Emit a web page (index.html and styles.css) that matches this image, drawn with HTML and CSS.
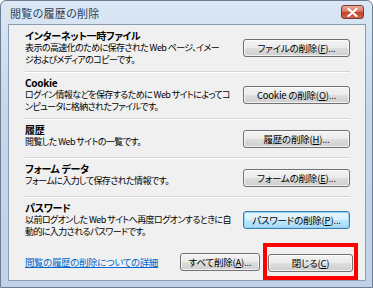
FILE: index.html
```html
<!DOCTYPE html>
<html lang="ja">
<head>
    <meta charset="UTF-8">
    <title>閲覧の履歴の削除</title>
    <link rel="stylesheet" href="styles.css">
</head>
<body>

    <div class="window">
        <div class="title-bar">
            <span class="title-text">閲覧の履歴の削除</span>
            <span class="close-btn">
                <svg width="11" height="9" viewBox="0 0 11 9">
                    <path d="M1.5 1 L9.5 8 M9.5 1 L1.5 8" stroke="#ffffff" stroke-width="2.2" stroke-linecap="round"/>
                </svg>
            </span>
        </div>

        <div class="content">
            <div class="section">
                <div class="text-box">
                    <h3>インターネット一時ファイル</h3>
                    <p>表示の高速化のために保存された Web ページ、イメー<br>ジおよびメディアのコピーです。</p>
                </div>
                <button class="btn">ファイルの削除(<u>F</u>)...</button>
            </div>

            <div class="section">
                <div class="text-box">
                    <h3>Cookie</h3>
                    <p>ログイン情報などを保存するために Web サイトによってコ<br>ンピュータに格納されたファイルです。</p>
                </div>
                <button class="btn">Cookie の削除(<u>O</u>)...</button>
            </div>

            <div class="section short">
                <div class="text-box">
                    <h3>履歴</h3>
                    <p>閲覧した Web サイトの一覧です。</p>
                </div>
                <button class="btn">履歴の削除(<u>H</u>)...</button>
            </div>

            <div class="section short">
                <div class="text-box">
                    <h3>フォーム データ</h3>
                    <p>フォームに入力して保存された情報です。</p>
                </div>
                <button class="btn">フォームの削除(<u>E</u>)...</button>
            </div>

            <div class="section last">
                <div class="text-box">
                    <h3>パスワード</h3>
                    <p>以前ログオンした Web サイトへ再度ログオンするときに自<br>動的に入力されるパスワードです。</p>
                </div>
                <button class="btn focused">パスワードの削除(<u>P</u>)...</button>
            </div>

            <div class="bottom-row">
                <a class="link" href="#">閲覧の履歴の削除についての詳細</a>
                <button class="btn btn-all">すべて削除(<u>A</u>)...</button>
                <div class="highlight">
                    <button class="btn btn-close">閉じる(<u>C</u>)</button>
                </div>
            </div>
        </div>
    </div>

</body>
</html>
```

FILE: styles.css
```css
body {
    margin: 0;
    padding: 0;
    background: #ffffff;
    font-family: "Noto Sans CJK JP", sans-serif;
    font-feature-settings: "palt";
}

.window {
    width: 373px;
    height: 288px;
    box-sizing: border-box;
    border: 1px solid #6d7d92;
    border-radius: 6px 6px 0 0;
    background: linear-gradient(180deg, #dbe7f4 0%, #c6d7ea 40%, #bfd2e7 100%);
    display: flex;
    flex-direction: column;
}

.title-bar {
    height: 24px;
    display: flex;
    align-items: center;
    justify-content: space-between;
    padding: 0 8px 0 9px;
}

.title-text {
    font-size: 11px;
    color: #2c3e57;
    letter-spacing: 0.3px;
    margin-top: 1px;
}

.close-btn {
    width: 23px;
    height: 14px;
    margin-top: -1px;
    box-sizing: border-box;
    border: 1px solid #7a3a33;
    border-radius: 3px;
    background: linear-gradient(180deg, #e9a99b 0%, #d77a66 45%, #c2432a 55%, #d0624a 100%);
    display: flex;
    align-items: center;
    justify-content: center;
}

.content {
    flex: 1;
    margin: 0 6px 6px 7px;
    background: #f0f0f0;
    border: 1px solid #8b9db3;
    padding: 0 15px 0 16px;
}

.section {
    display: flex;
    align-items: center;
    justify-content: space-between;
    gap: 6px;
    padding: 5px 0 5px;
    border-bottom: 1px solid #d5d5d5;
    box-shadow: 0 1px 0 #ffffff;
}

.section.short .text-box {
    min-height: 29px;
}

.section.short {
    padding: 5px 0 4px;
}

.section.last {
    border-bottom: none;
    box-shadow: none;
}

.text-box h3 {
    margin: 0;
    font-size: 10px;
    line-height: 12px;
    letter-spacing: -0.3px;
    font-weight: bold;
    color: #000000;
}

.text-box p {
    margin: 0;
    font-size: 9px;
    line-height: 12px;
    letter-spacing: -0.6px;
    color: #000000;
    white-space: nowrap;
}

.btn {
    flex-shrink: 0;
    width: 107px;
    height: 18px;
    padding: 0;
    box-sizing: border-box;
    border: 1px solid #707070;
    border-radius: 3px;
    background: linear-gradient(180deg, #f3f3f3 0%, #ebebeb 48%, #dddddd 52%, #cfcfcf 100%);
    box-shadow: inset 0 0 0 1px rgba(255, 255, 255, 0.7);
    font-family: "Noto Sans CJK JP", sans-serif;
    font-feature-settings: "palt";
    font-size: 9.5px;
    line-height: 14px;
    letter-spacing: -0.2px;
    color: #000000;
    white-space: nowrap;
}

.btn.focused {
    border-color: #3c7fb1;
    background: linear-gradient(180deg, #eaf6fd 0%, #d9f0fc 48%, #bee6fd 52%, #a7d9f5 100%);
    box-shadow: inset 0 0 0 1px #8fd3f7;
}

.bottom-row {
    display: flex;
    align-items: center;
    margin: 0 -8px 0 0;
}

.link {
    flex: 1;
    font-size: 9.5px;
    line-height: 12px;
    letter-spacing: -0.4px;
    color: #0066cc;
    text-decoration: underline;
}

.btn-all {
    width: 80px;
    margin-right: 3px;
}

.highlight {
    border: 4px solid #ff0000;
    padding: 1px 1px 4px;
}

.btn-close {
    width: 85px;
}
```
